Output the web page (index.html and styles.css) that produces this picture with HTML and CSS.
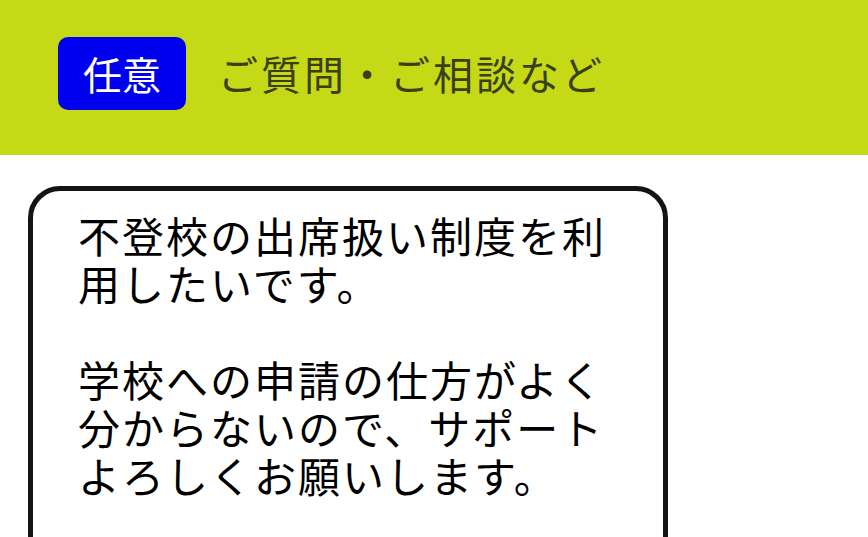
FILE: index.html
```html
<!DOCTYPE html>
<html lang="ja">
<head>
<meta charset="utf-8">
<link rel="stylesheet" href="styles.css">
</head>
<body>
<header class="head">
  <span class="badge">任意</span>
  <span class="title">ご質問・ご相談など</span>
</header>
<main class="content">
  <div class="card">
    <p class="msg">不登校の出席扱い制度を利<br>用したいです。</p>
    <p class="msg">学校への申請の仕方がよく<br>分からないので、サポート<br>よろしくお願いします。</p>
  </div>
</main>
</body>
</html>
```
FILE: styles.css
```css
html, body {
  margin: 0;
  padding: 0;
  background: #ffffff;
  font-family: "Noto Sans CJK JP", "Noto Sans", sans-serif;
  overflow: hidden;
}
.head {
  height: 155px;
  box-sizing: border-box;
  background: #c5d916;
  display: flex;
  align-items: flex-start;
  padding: 37px 0 0 58px;
  gap: 32px;
}
.badge {
  width: 128px;
  height: 73px;
  box-sizing: border-box;
  background: #0000f0;
  color: #ffffff;
  border-radius: 10px;
  display: flex;
  align-items: center;
  justify-content: center;
  font-size: 39px;
  line-height: 1;
}
.title {
  height: 71px;
  display: flex;
  align-items: center;
  font-size: 40px;
  color: #3b3f16;
  letter-spacing: 3px;
}
.content {
  padding: 31px 0 0 28px;
}
.card {
  width: 640px;
  height: 420px;
  box-sizing: border-box;
  border: 5px solid #141414;
  border-radius: 32px;
  padding: 20px 10px 0 45px;
}
.msg {
  margin: 0 0 48px 0;
  font-size: 42px;
  line-height: 48px;
  color: #000000;
  letter-spacing: 2px;
  white-space: nowrap;
}
```
